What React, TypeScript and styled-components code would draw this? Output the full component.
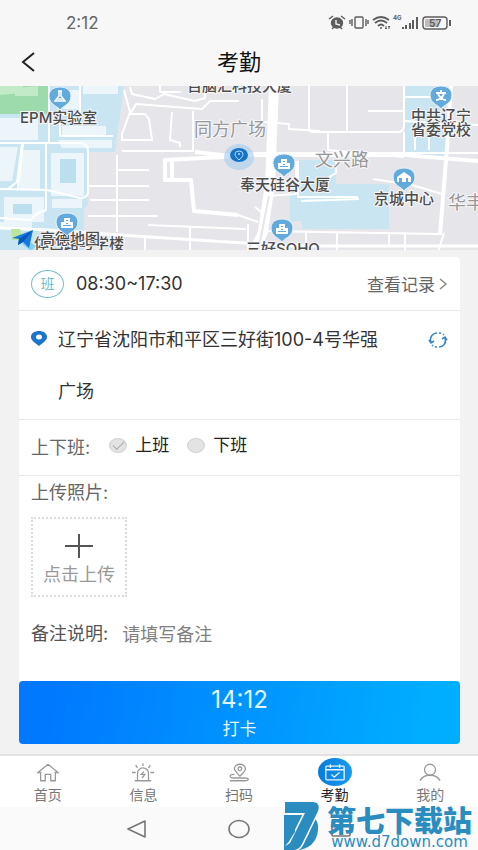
import React, { useState } from "react";
import styled, { createGlobalStyle, css } from "styled-components";

const GlobalStyle = createGlobalStyle`
  * { box-sizing: border-box; }
  body {
    margin: 0;
    background: #f2f2f2;
    color: #333;
    font-family: Inter, "Noto Sans CJK SC", sans-serif;
    font-size: 18px;
  }
  button, input { font: inherit; color: inherit; }
`;

const Page = styled.div`
  position: relative;
  display: flex;
  flex-direction: column;
  min-height: 100vh;
`;

const StatusBar = styled.div`
  display: flex;
  align-items: center;
  justify-content: space-between;
  height: 44px;
  padding: 2px 26px 0 66px;
  background: #f7f7f7;
  color: #666;
  font-size: 17px;
`;

const Header = styled.header`
  display: grid;
  grid-template-columns: 56px 1fr 56px;
  align-items: center;
  height: 42px;
  padding-bottom: 6px;
  background: #f7f7f7;
`;

const BackButton = styled.button`
  display: flex;
  padding: 6px 20px;
  border: 0;
  background: none;
`;

const Title = styled.h1`
  margin: 0;
  text-align: center;
  color: #111;
  font-size: 22px;
  line-height: 32px;
  font-weight: 400;
`;

const MapArea = styled.div`
  height: 166px;
  overflow: hidden;
  svg { display: block; width: 100%; height: 100%; }
`;

const Content = styled.main`
  display: flex;
  flex: 1;
  flex-direction: column;
  padding: 5px 18px 10px 19px;
`;

const Card = styled.section`
  flex: 1;
  border-radius: 4px 4px 0 0;
  background: #fff;
`;

const Row = styled.div<{ $height: number }>`
  display: flex;
  align-items: center;
  min-height: ${(p) => p.$height}px;
  padding: 0 12px;
  border-bottom: 1px solid #e9e9e9;
`;

const ShiftBadge = styled.span`
  display: grid;
  place-items: center;
  width: 33px;
  height: 28px;
  margin-right: 12px;
  border: 1px solid #79bfc4;
  border-radius: 50%;
  color: #6dbcc4;
  font-size: 14px;
  line-height: 20px;
`;

const Hours = styled.span`
  flex: 1;
  font-size: 18px;
`;

const RecordsLink = styled.a`
  display: flex;
  align-items: center;
  gap: 4px;
  color: #666;
  font-size: 17px;
  text-decoration: none;
`;

const AddressRow = styled(Row)`
  align-items: flex-start;
`;

const PinSlot = styled.span`
  display: flex;
  padding: 20px 11px 0 0;
`;

const Address = styled.p`
  flex: 1;
  margin: 0;
  padding-top: 3px;
  font-size: 18px;
  line-height: 52px;
`;

const RefreshButton = styled.button`
  display: flex;
  margin-top: 20px;
  padding: 0;
  border: 0;
  background: none;
`;

const Label = styled.span`
  color: #666;
  font-size: 18px;
  line-height: 28px;
`;

const ShiftGroup = styled.fieldset`
  display: flex;
  gap: 18px;
  margin: 0;
  padding: 0 0 6px 19px;
  border: 0;
`;

const Option = styled.label`
  display: flex;
  align-items: center;
  gap: 8px;
  color: #222;
  font-size: 17px;
  line-height: 24px;
`;

const Radio = styled.input`
  display: grid;
  place-items: center;
  width: 18px;
  height: 15px;
  margin: 2px 0 0;
  appearance: none;
  border: 1px solid #d2d2d2;
  border-radius: 50%;
  background: #e3e3e3;
  &:checked::after {
    content: "";
    width: 10px;
    height: 5px;
    margin-bottom: 3px;
    border: solid #aaa;
    border-width: 0 0 1px 1px;
    transform: rotate(-45deg);
  }
`;

const Details = styled.div`
  display: flex;
  flex-direction: column;
  align-items: flex-start;
  padding: 3px 12px;
`;

const UploadButton = styled.button`
  display: flex;
  flex-direction: column;
  align-items: center;
  gap: 4px;
  width: 96px;
  height: 80px;
  margin: 10px 0 23px;
  padding: 15px 0 0;
  border: 2px dotted #dcdcdc;
  background: #fff;
  color: #999;
  font-size: 18px;
  line-height: 26px;
  white-space: nowrap;
`;

const NoteRow = styled.div`
  display: flex;
  align-items: center;
  gap: 14px;
  width: 100%;
`;

const NoteLabel = styled.label`
  color: #555;
  line-height: 28px;
`;

const NoteInput = styled.input`
  flex: 1;
  min-width: 0;
  padding: 0;
  border: 0;
  outline: 0;
  background: none;
  &::placeholder { color: #808080; opacity: 1; }
`;

const PunchButton = styled.button`
  display: flex;
  flex-direction: column;
  align-items: center;
  justify-content: center;
  gap: 4px;
  min-height: 63px;
  padding: 2px 0 0;
  border: 0;
  border-radius: 4px;
  background: linear-gradient(100deg, #0079ff 8%, #00aeff 92%);
  color: #e4f6ff;
`;

const PunchTime = styled.span`
  font-size: 24px;
  line-height: 26px;
`;

const PunchText = styled.span`
  font-size: 17px;
  line-height: 24px;
`;

const TabBar = styled.nav`
  display: grid;
  grid-template-columns: repeat(5, 1fr);
  min-height: 53px;
  border-top: 2px solid #e2e2e2;
  background: #fff;
`;

const IconSlot = styled.span<{ $active: boolean }>`
  display: grid;
  place-items: center;
  width: 34px;
  height: 28px;
  border-radius: 50%;
  color: #999;
  ${(p) =>
    p.$active &&
    css`
      background: linear-gradient(90deg, #087bdc, #169bf0);
      color: #e7f5ff;
    `}
`;

const Tab = styled.a<{ $active: boolean }>`
  display: flex;
  flex-direction: column;
  align-items: center;
  padding-top: 2px;
  color: ${(p) => (p.$active ? "#222" : "#777")};
  font-size: 14px;
  line-height: 18px;
  text-decoration: none;
`;

const SystemNav = styled.div`
  display: grid;
  grid-template-columns: repeat(3, 102px);
  justify-content: center;
  height: 43px;
  background: #fafafa;
`;

const SystemButton = styled.button`
  display: grid;
  place-items: center;
  padding: 0;
  border: 0;
  background: none;
`;

const Watermark = styled.div`
  position: absolute;
  right: 6px;
  bottom: 0;
  display: flex;
  align-items: flex-end;
  gap: 7px;
  color: #2b8cc0;
  pointer-events: none;
`;

const WatermarkText = styled.div`
  display: flex;
  flex-direction: column;
  align-items: center;
`;

const WatermarkName = styled.strong`
  font-family: "Noto Sans CJK SC", sans-serif;
  font-size: 29px;
  line-height: 32px;
  font-weight: 900;
`;

const WatermarkUrl = styled.span`
  font-family: "DejaVu Sans", sans-serif;
  font-size: 15px;
  line-height: 15px;
`;

const MapLabel = styled.text<{ $road?: boolean }>`
  fill: ${(p) => (p.$road ? "#989898" : "#4c4c4c")};
  stroke: #f6f7f9;
  stroke-width: 2px;
  paint-order: stroke;
  font-size: ${(p) => (p.$road ? 18 : 15)}px;
  font-weight: ${(p) => (p.$road ? 400 : 500)};
`;

type PinKind = "tower" | "lab" | "school" | "house";

function MapPin({ x, y, kind }: { x: number; y: number; kind: PinKind }) {
  return (
    <g transform={`translate(${x} ${y})`}>
      <path
        d="M0 13 C-2 9-11 8-11-1 C-11-7-6-10 0-10 S11-7 11-1 C11 8 2 9 0 13Z"
        fill="#62a9dc"
        stroke="#e9f4fb"
      />
      {kind === "tower" && (
        <path d="M-3-5H3V-1H6V5H-6V-1H-3ZM-1-3V-2H1V-3ZM-1 0V1H1V0ZM-4 2V3H4V2Z" fill="#fff" fillRule="evenodd" />
      )}
      {kind === "lab" && (
        <path d="M-2-6h4M-1-6v5l-4 5H5L1-1v-5M-3 2h6" fill="none" stroke="#fff" strokeWidth="1.5" />
      )}
      {kind === "school" && (
        <path d="M0-6v2M-5-3H5M-3-2C-1 2 2 4 5 4M3-2C1 2-2 4-5 4" fill="none" stroke="#fff" strokeWidth="1.8" />
      )}
      {kind === "house" && (
        <path d="M-7-1 0-6 7-1V4H4V0H2V4H-2V0H-5V4H-7Z" fill="#fff" />
      )}
    </g>
  );
}

function CityMap() {
  return (
    <svg viewBox="0 0 478 166" preserveAspectRatio="xMidYMid slice" role="img" aria-label="地图">
      <rect width="478" height="166" fill="#e6e6ea" />
      <path d="M0 0H124L115 66H88V118L84 124V166H0Z" fill="#c9e5f2" />
      <path d="M0 0H49V28H0Z" fill="#9ddbac" />
      <path d="M0 0H23L20 7 0 9ZM15 2 38 0V10H15Z" fill="#c2eac8" />
      <g fill="#ecf6fa">
        <path d="M0 32H38V54H0ZM62 40H106V50H62ZM58 54H112V62H62ZM83 0H118V8H83ZM57 4H80V23H57ZM0 61H18L12 95H0ZM20 64H40V103H20ZM51 67H84V110H51ZM4 111H44V136H4ZM52 113H82V122H52ZM0 136H32V142H0Z" />
      </g>
      <path d="M60 73H76V97H60ZM13 118H32V128H13Z" fill="#bcdfef" />
      <g fill="#c9e5f2">
        <path d="M405 0H446V72H405ZM299 74H336V98H299ZM290 98H389V143H302V135H290Z" />
      </g>

      <g fill="none" stroke="#fff" strokeWidth="2" strokeLinejoin="round">
        <path d="M49 0V58M0 57H80Q88 57 88 66V106Q88 112 80 112L47 104 0 103M22 58 17 96 8 103M23 58 18 103M46 58V124L36 128 31 134 0 132M80 0V29H60V50H113" />
        <path d="M124 4 130 26 122 48V54H152L149 33 145 28H130L136 18 202 23 210 15H239M130 1 132 8 155 13 164 8 195 15 205 12 206 0M160 0V6H181M172 26 170 54 180 57V61M193 25V66M122 65H192M117 69V146M89 100H149M90 114H149M88 130H158M118 84H149M148 139 246 143M190 140V164M145 150V166" />
        <path d="M262 13V42M309 0V42Q309 46 314 46H398Q404 46 404 40V0M347 0V46M368 25H404M262 36 289 38V43L320 45M328 46V64L404 71M404 46V71M336 75V87L326 93M298 75V111H358M301 115 359 113M373 93 412 99 442 108M405 11H443M429 29V64M242 67H478M266 110 296 108V75M255 121 264 128M238 129 258 136M263 145 440 148M306 146V166M337 147V166M389 147V160M405 146V166M444 147 438 166M248 138V166M405 35 478 39M415 45V64" />
      </g>
      <g fill="none" stroke="#fff" strokeWidth="4" strokeLinejoin="round">
        <path d="M242 70 165 74V94H191L194 125 238 129M172 75V93M195 66 230 70M440 149 447 62 451 0M242 69H404L478 75" />
        <path d="M0 142 48 144 150 151 290 160H478" strokeWidth="3" />
      </g>
      <path d="M274 0 270 98 263 146 254 166" fill="none" stroke="#fff" strokeWidth="10" />
      <path d="M269 110 258 166" fill="none" stroke="#e6e6ea" strokeWidth="2" />

      <MapLabel x="187" y="5">百脑汇科技大厦</MapLabel>
      <MapLabel $road x="194" y="50">同方广场</MapLabel>
      <MapLabel $road x="315" y="80">文兴路</MapLabel>
      <MapLabel $road x="448" y="123">华丰街</MapLabel>
      <MapLabel x="20" y="37">EPM实验室</MapLabel>
      <MapLabel x="411" y="35">中共辽宁</MapLabel>
      <MapLabel x="411" y="49">省委党校</MapLabel>
      <MapLabel x="374" y="118">京城中心</MapLabel>
      <MapLabel x="240" y="104">奉天硅谷大厦</MapLabel>
      <MapLabel x="246" y="168">三好SOHO</MapLabel>
      <MapLabel x="34" y="163">体西路与学楼</MapLabel>
      <MapLabel x="40" y="158">高德地图</MapLabel>

      <MapPin x={60} y={11} kind="lab" />
      <MapPin x={67} y={137} kind="tower" />
      <MapPin x={441} y={10} kind="school" />
      <MapPin x={284} y={78} kind="tower" />
      <MapPin x={404} y={92} kind="house" />
      <MapPin x={282} y={143} kind="tower" />

      <ellipse cx="239" cy="71" rx="15" ry="13" fill="#a9cfec" opacity="0.65" />
      <ellipse cx="239" cy="69" rx="9" ry="7" fill="#1473c8" />
      <path d="M239 74C236 71 235 70 235 68a4 3 0 0 1 8 0c0 2-1 3-4 6Z" fill="none" stroke="#b8dcf7" />
      <circle cx="239" cy="68" r="1" fill="#b8dcf7" />

      <path d="M11 143H20L23 154H12Z" fill="#b9e79b" />
      <path d="M26 153 36 160 31 165 22 158Z" fill="#82d1f2" />
      <path d="M12 152 33 144 29 162 23 156 18 159 19 153Z" fill="#1677df" />
      <path d="M19 153 33 144 23 156 18 159Z" fill="#0758b7" />
      <rect y="164" width="478" height="2" fill="#f2f2f2" />
    </svg>
  );
}

function StatusIcons() {
  return (
    <svg width="124" height="18" viewBox="0 0 124 18" fill="none" stroke="#5d5d5d" strokeWidth="1.4" aria-hidden="true">
      <ellipse cx="9" cy="9" rx="5.5" ry="5" fill="#5d5d5d" />
      <path d="M1 5 5 2M17 5 13 2M4 15l2-2M14 15l-2-2" />
      <path d="M8 6v4l4 1" stroke="#f7f7f7" />
      <rect x="27" y="3" width="8" height="11" rx="1" />
      <path d="M24 5v7M22 6v4M38 5v7M40 6v4" />
      <path d="M45 6Q53 0 61 6M47 9Q53 4 59 9M50 12Q53 9 56 12" strokeWidth="1.8" />
      <circle cx="53" cy="14" r="1" fill="#5d5d5d" stroke="none" />
      <path d="M58 12v3m-1-1 1 1 1-1M61 15v-3m-1 1 1-1 1 1" strokeWidth="1" />
      <text x="65" y="6" fontSize="6" fontWeight="700" fill="#5d5d5d" stroke="none">4G</text>
      <path d="M75 15v-2M78 15v-4M82 15V9M85 15V6M89 15V3" strokeWidth="2" />
      <rect x="95" y="3" width="24" height="12" rx="3" />
      <rect x="97" y="5" width="13" height="8" rx="1" fill="#bdbdbd" stroke="none" />
      <path d="M122 6v6" strokeWidth="2" />
      <text x="101" y="13" fontSize="10" fontWeight="700" fill="#5d5d5d" stroke="none">57</text>
    </svg>
  );
}

const tabs = [
  {
    name: "首页",
    icon: <path d="M1 10 12 1 23 10H20V19H15V12H9V19H4V10Z" />,
  },
  {
    name: "信息",
    icon: (
      <>
        <path d="M3 19H21M6 19V11a6 6 0 0 1 12 0v8M12 3V0M6 5 4 2M18 5l2-3M4 10H0M20 10h4" />
        <path d="m13 9-3 3h4l-3 4" />
      </>
    ),
  },
  {
    name: "扫码",
    icon: (
      <>
        <path d="M13 14C9 10 7 8 7 6a6 5 0 0 1 12 0c0 3-2 4-6 8Z" />
        <ellipse cx="13" cy="6" rx="2" ry="2" />
        <path d="M7 12C1 12 1 16 6 16H18C24 16 23 19 18 19H2" />
      </>
    ),
  },
  {
    name: "考勤",
    icon: (
      <>
        <rect x="2" y="3" width="20" height="15" rx="1" />
        <path d="M2 7H22M7 1V5M17 1V5M8 12l3 3 6-5" />
      </>
    ),
  },
  {
    name: "我的",
    icon: (
      <>
        <ellipse cx="12" cy="7" rx="6" ry="6" />
        <path d="M1 19C3 15 7 13 12 13S21 15 23 19" />
      </>
    ),
  },
];

export default function App() {
  const [shift, setShift] = useState("上班");
  const [note, setNote] = useState("");
  const [active, setActive] = useState("考勤");

  return (
    <>
      <GlobalStyle />
      <Page>
        <StatusBar>
          <span>2:12</span>
          <StatusIcons />
        </StatusBar>
        <Header>
          <BackButton aria-label="返回">
            <svg width="16" height="20" viewBox="0 0 16 20" fill="none" stroke="#222" strokeWidth="2">
              <path d="M14 1 3 10l11 9" />
            </svg>
          </BackButton>
          <Title>考勤</Title>
        </Header>
        <MapArea>
          <CityMap />
        </MapArea>
        <Content>
          <Card>
            <Row $height={54}>
              <ShiftBadge>班</ShiftBadge>
              <Hours>08:30~17:30</Hours>
              <RecordsLink href="#records">
                查看记录
                <svg width="9" height="14" viewBox="0 0 9 14" fill="none" stroke="#888" strokeWidth="1.5">
                  <path d="m1 2 6 5-6 5" />
                </svg>
              </RecordsLink>
            </Row>
            <AddressRow $height={109}>
              <PinSlot>
                <svg width="16" height="16" viewBox="0 0 16 16">
                  <path d="M8 15C5 12 0 10 0 6 0 2 4 0 8 0s8 2 8 6c0 4-5 6-8 9Z" fill="#1b75c9" />
                  <ellipse cx="8" cy="6" rx="3" ry="2.5" fill="#fff" />
                </svg>
              </PinSlot>
              <Address>
                辽宁省沈阳市和平区三好街100-4号华强
                <br />
                广场
              </Address>
              <RefreshButton aria-label="刷新位置">
                <svg width="20" height="18" viewBox="0 0 20 18" fill="none" stroke="#3188c5" strokeWidth="1.6">
                  <path d="M3 11C1 6 5 2 9 2M17 7c2 5-2 9-6 9" />
                  <path d="M11 2c2 0 4 1 5 2M9 16c-2 0-4-1-5-2" strokeDasharray="2 2" />
                  <path d="m1 9 2 3 3-2M14 8l3-2 2 3" />
                </svg>
              </RefreshButton>
            </AddressRow>
            <Row $height={56}>
              <Label id="shift-label">上下班:</Label>
              <ShiftGroup aria-labelledby="shift-label">
                {["上班", "下班"].map((name) => (
                  <Option key={name}>
                    <Radio type="radio" name="shift" checked={shift === name} onChange={() => setShift(name)} />
                    {name}
                  </Option>
                ))}
              </ShiftGroup>
            </Row>
            <Details>
              <Label>上传照片:</Label>
              <UploadButton>
                <svg width="28" height="24" viewBox="0 0 28 24" stroke="#555" strokeWidth="2">
                  <path d="M14 0v24M0 12h28" />
                </svg>
                点击上传
              </UploadButton>
              <NoteRow>
                <NoteLabel htmlFor="note">备注说明:</NoteLabel>
                <NoteInput id="note" placeholder="请填写备注" value={note} onChange={(e) => setNote(e.target.value)} />
              </NoteRow>
            </Details>
          </Card>
          <PunchButton>
            <PunchTime>14:12</PunchTime>
            <PunchText>打卡</PunchText>
          </PunchButton>
        </Content>
        <TabBar>
          {tabs.map((tab) => (
            <Tab key={tab.name} href="#" $active={tab.name === active} onClick={() => setActive(tab.name)}>
              <IconSlot $active={tab.name === active}>
                <svg width="22" height="19" viewBox="0 0 24 20" fill="none" stroke="currentColor" strokeWidth="1.4">
                  {tab.icon}
                </svg>
              </IconSlot>
              {tab.name}
            </Tab>
          ))}
        </TabBar>
        <SystemNav>
          <SystemButton aria-label="后退">
            <svg width="22" height="20" viewBox="0 0 22 20" fill="none" stroke="#777" strokeWidth="1.6" strokeLinejoin="round">
              <path d="M19 2v16L2 10Z" />
            </svg>
          </SystemButton>
          <SystemButton aria-label="主屏幕">
            <svg width="24" height="20" viewBox="0 0 24 20" fill="none" stroke="#777" strokeWidth="1.6">
              <ellipse cx="12" cy="10" rx="10" ry="8.5" />
            </svg>
          </SystemButton>
          <SystemButton aria-label="最近任务">
            <svg width="22" height="18" viewBox="0 0 22 18" fill="none" stroke="#777" strokeWidth="1.6">
              <rect x="2" y="1" width="18" height="15" rx="1" />
            </svg>
          </SystemButton>
        </SystemNav>
        <Watermark>
          <svg width="36" height="49" viewBox="0 0 36 49" fill="#2b8cc0">
            <path d="M0 14H24C31 15 35 21 34 29 33 41 25 49 12 49H0Z" />
            <path d="M24 24C27 28 25 35 20 39Z" fill="#fafafa" />
            <path
              d="M1 1H29C34 1 36 5 34 10L18 43Q15 49 9 49H0V46L6 42 21 12H1Z"
              stroke="#fafafa"
              strokeWidth="3"
              paintOrder="stroke"
            />
            <path d="M0 14H14L11 20V31L0 47Z" />
          </svg>
          <WatermarkText>
            <WatermarkName>第七下载站</WatermarkName>
            <WatermarkUrl>www.d7down.com</WatermarkUrl>
          </WatermarkText>
        </Watermark>
      </Page>
    </>
  );
}
